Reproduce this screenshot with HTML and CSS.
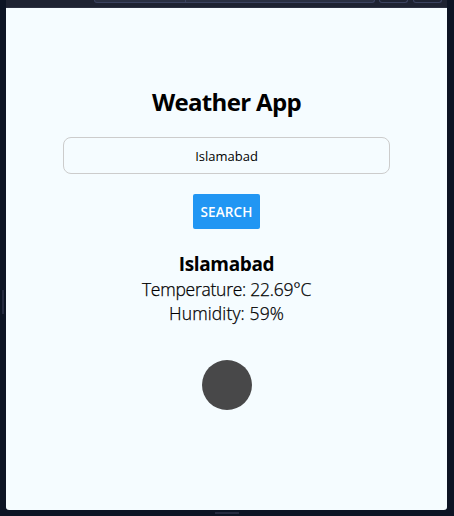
FILE: index.html
```
<!DOCTYPE html>
<html lang="en">
<head>
<meta charset="utf-8">
<title>Weather App</title>
<link rel="stylesheet" href="styles.css">
</head>
<body>
<div class="frame">
  <div class="left-rail"><span class="grip grip-vertical"></span></div>
  <div class="panel">
    <div class="toolbar">
      <div class="address"><span class="address-lead"></span></div>
      <div class="tool"></div>
      <div class="tool"></div>
    </div>
    <main class="app">
      <h1 class="title"><span>Weather App</span></h1>
      <input class="city-input" type="text" value="Islamabad" aria-label="City">
      <button class="search" type="button"><span>SEARCH</span></button>
      <h2 class="city"><span>Islamabad</span></h2>
      <p class="reading temperature"><span>Temperature: 22.69°C</span></p>
      <p class="reading humidity"><span>Humidity: 59%</span></p>
      <svg class="condition" width="52" height="52" viewBox="0 0 52 52" aria-hidden="true"><circle cx="26" cy="26" r="25" fill="#484849"/></svg>
    </main>
  </div>
  <div class="right-rail"></div>
</div>
<div class="bottom-rail"><span class="grip grip-horizontal"></span></div>
</body>
</html>
```

FILE: styles.css
```
* { box-sizing: border-box; }
body {
  margin: 0;
  width: 454px;
  height: 516px;
  overflow: hidden;
  background: #0c1424;
  color: #000;
  font-family: "Open Sans", "Noto Sans", sans-serif;
}
.frame { display: flex; height: 510px; }
.left-rail { width: 6px; padding: 290px 0 0 2px; }
.right-rail { width: 7px; }
.grip { display: block; background: #252b40; }
.grip-vertical { width: 2px; height: 24px; }
.grip-horizontal { width: 24px; height: 2px; }
.bottom-rail { height: 6px; padding: 2px 0 0 215px; }
.panel {
  width: 441px;
  display: flex;
  flex-direction: column;
  border-radius: 0 0 3px 3px;
  overflow: hidden;
  background: #f5fcff;
}
.toolbar {
  display: flex;
  height: 8px;
  padding-left: 88px;
  background: #1e2332;
  border-bottom: 1px solid #2b3040;
}
.address, .tool {
  height: 3px;
  border: 1px solid #3b4360;
  border-top: 0;
  border-radius: 0 0 4px 4px;
}
.address { width: 282px; margin-right: 4px; background: #2a3042; }
.address-lead { display: block; width: 91px; height: 2px; border-right: 1px solid #3b4360; }
.tool { width: 29px; margin-right: 5px; }
.app { display: flex; flex-direction: column; align-items: center; padding-top: 77px; }
.title, .city, .reading { margin: 0; white-space: nowrap; }
.title { height: 34px; line-height: 34px; font-size: 24px; font-weight: 700; letter-spacing: -0.65px; }
.city-input {
  width: 327px;
  height: 37px;
  margin-top: 18px;
  padding: 0 10px;
  border: 1px solid #ccc;
  border-radius: 8px;
  background: transparent;
  color: #000;
  font: 13px "Open Sans", sans-serif;
  letter-spacing: 0;
  text-align: center;
}
.search {
  width: 67px;
  height: 35px;
  margin-top: 20px;
  padding: 0;
  border: 0;
  border-radius: 2px;
  background: #2196f3;
  color: #fff;
  font: 600 13.5px "Open Sans", sans-serif;
  letter-spacing: 0.15px;
}
.city { height: 24px; margin-top: 23px; line-height: 24px; font-size: 19px; font-weight: 700; letter-spacing: -0.35px; }
.reading {
  height: 24px;
  line-height: 24px;
  font-size: 17.5px;
  font-weight: 300;
  -webkit-text-stroke: 0.25px #000;
}
.temperature { margin-top: 1px; letter-spacing: -0.25px; }
.humidity { letter-spacing: 0.12px; }
.condition { display: block; margin-top: 34px; }
```
